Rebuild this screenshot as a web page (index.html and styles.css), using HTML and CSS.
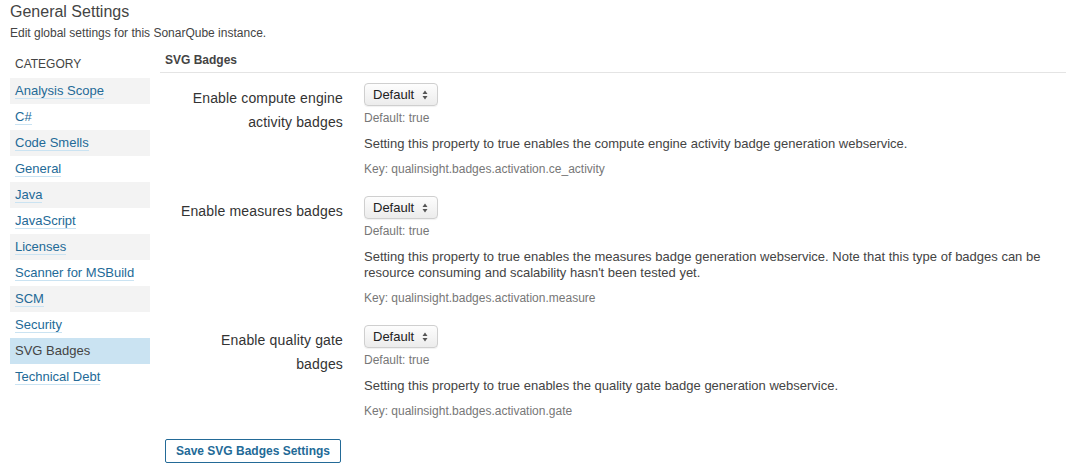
FILE: index.html
```html
<!DOCTYPE html>
<html>
<head>
<meta charset="utf-8">
<link rel="stylesheet" href="styles.css">
</head>
<body>
<div class="page">
  <header class="page-header">
    <h1 class="page-title">General Settings</h1>
    <p class="page-desc">Edit global settings for this SonarQube instance.</p>
  </header>
  <div class="layout">
    <aside class="sidebar">
      <div class="cat-title">CATEGORY</div>
      <ul class="cat-list">
        <li class="cat-item shaded"><a class="cat-link">Analysis Scope</a></li>
        <li class="cat-item"><a class="cat-link">C#</a></li>
        <li class="cat-item shaded"><a class="cat-link">Code Smells</a></li>
        <li class="cat-item"><a class="cat-link">General</a></li>
        <li class="cat-item shaded"><a class="cat-link">Java</a></li>
        <li class="cat-item"><a class="cat-link">JavaScript</a></li>
        <li class="cat-item shaded"><a class="cat-link">Licenses</a></li>
        <li class="cat-item"><a class="cat-link">Scanner for MSBuild</a></li>
        <li class="cat-item shaded"><a class="cat-link">SCM</a></li>
        <li class="cat-item"><a class="cat-link">Security</a></li>
        <li class="cat-item selected"><span class="cat-current">SVG Badges</span></li>
        <li class="cat-item"><a class="cat-link">Technical Debt</a></li>
      </ul>
    </aside>
    <main class="main">
      <h2 class="section-title">SVG Badges</h2>
      <div class="defs">
        <div class="def">
          <div class="def-name">Enable compute engine activity badges</div>
          <div class="def-field">
            <div class="select"><span>Default</span><svg class="arrows" width="6" height="10" viewBox="0 0 6 10"><path d="M0.5 4 L3 0.5 L5.5 4 Z M0.5 6 L3 9.5 L5.5 6 Z" fill="#555"/></svg></div>
            <div class="def-default">Default: true</div>
            <div class="def-desc">Setting this property to true enables the compute engine activity badge generation webservice.</div>
            <div class="def-key">Key: qualinsight.badges.activation.ce_activity</div>
          </div>
        </div>
        <div class="def">
          <div class="def-name">Enable measures badges</div>
          <div class="def-field">
            <div class="select"><span>Default</span><svg class="arrows" width="6" height="10" viewBox="0 0 6 10"><path d="M0.5 4 L3 0.5 L5.5 4 Z M0.5 6 L3 9.5 L5.5 6 Z" fill="#555"/></svg></div>
            <div class="def-default">Default: true</div>
            <div class="def-desc">Setting this property to true enables the measures badge generation webservice. Note that this type of badges can be resource consuming and scalability hasn't been tested yet.</div>
            <div class="def-key">Key: qualinsight.badges.activation.measure</div>
          </div>
        </div>
        <div class="def">
          <div class="def-name">Enable quality gate badges</div>
          <div class="def-field">
            <div class="select"><span>Default</span><svg class="arrows" width="6" height="10" viewBox="0 0 6 10"><path d="M0.5 4 L3 0.5 L5.5 4 Z M0.5 6 L3 9.5 L5.5 6 Z" fill="#555"/></svg></div>
            <div class="def-default">Default: true</div>
            <div class="def-desc">Setting this property to true enables the quality gate badge generation webservice.</div>
            <div class="def-key">Key: qualinsight.badges.activation.gate</div>
          </div>
        </div>
      </div>
      <button class="save-btn">Save SVG Badges Settings</button>
    </main>
  </div>
</div>
</body>
</html>
```

FILE: styles.css
```css
* { box-sizing: border-box; }
html, body { margin: 0; padding: 0; background: #fff; }
body {
  font-family: "Liberation Sans", Arial, Helvetica, sans-serif;
  color: #444;
  font-size: 13px;
}
.page { padding: 0 0 0 10px; }
.page-title {
  margin: 0;
  font-size: 16px;
  line-height: 24px;
  font-weight: normal;
  color: #444;
}
.page-desc {
  margin: 1px 0 0;
  font-size: 12px;
  line-height: 16px;
}
.layout {
  display: flex;
  margin-top: 9px;
}
.sidebar { width: 140px; flex: none; }
.cat-title {
  font-size: 12px;
  line-height: 16px;
  padding: 6px 5px;
  color: #444;
}
.cat-list { list-style: none; margin: 0; padding: 0; }
.cat-item {
  height: 26px;
  padding: 5px 5px;
  line-height: 16px;
  font-size: 13px;
}
.cat-item.shaded { background: #f3f3f3; }
.cat-item.selected { background: #cae3f2; }
.cat-link {
  color: #236a97;
  border-bottom: 1px solid #cae3f2;
  text-decoration: none;
}
.cat-current { color: #444; }
.main { flex: 1; margin-left: 10px; }
.section-title {
  margin: 0;
  font-size: 12px;
  font-weight: bold;
  line-height: 16px;
  padding: 2px 5px 4px;
  border-bottom: 1px solid #e4e4e4;
}
.defs { padding: 10px 0 0 5px; }
.def { display: flex; margin-bottom: 19px; }
.def-name {
  width: 178px;
  flex: none;
  padding-left: 14px;
  margin-top: 3px;
  text-align: right;
  font-size: 14px;
  line-height: 24px;
  color: #333;
  letter-spacing: 0.15px;
}
.def-field { margin-left: 21px; flex: 1; padding-right: 10px; }
.select {
  width: 74px;
  height: 23px;
  border: 1px solid #cfcfcf;
  border-radius: 4px;
  background: linear-gradient(#fdfdfd, #ececec);
  box-shadow: 0 1px 1px rgba(0,0,0,0.06);
  display: flex;
  align-items: center;
  justify-content: space-between;
  padding: 0 9px 0 8px;
  font-size: 13px;
  color: #222;
}
.arrows { display: block; }
.def-default {
  margin-top: 4px;
  font-size: 12px;
  line-height: 16px;
  color: #777;
}
.def-desc {
  margin-top: 10px;
  font-size: 13px;
  line-height: 16px;
  color: #444;
}
.def-key {
  margin-top: 9px;
  font-size: 12px;
  line-height: 16px;
  color: #777;
}
.save-btn {
  margin: 1px 0 0 5px;
  width: 176px;
  height: 24px;
  border: 1px solid #236a97;
  border-radius: 2px;
  background: #fff;
  color: #236a97;
  font-family: "Liberation Sans", Arial, sans-serif;
  font-size: 12px;
  font-weight: bold;
  padding: 0;
}
```
